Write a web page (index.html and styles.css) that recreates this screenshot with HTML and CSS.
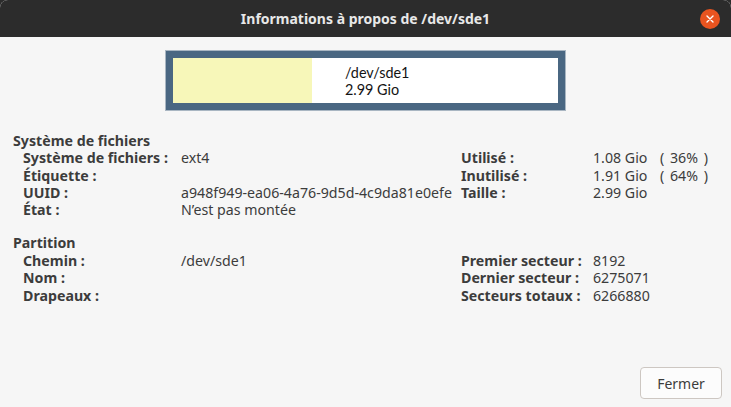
FILE: index.html
```html
<!DOCTYPE html>
<html lang="fr">
<head>
<meta charset="utf-8">
<title>Informations à propos de /dev/sde1</title>
<link rel="stylesheet" href="styles.css">
</head>
<body>
<div class="window">
  <header class="titlebar">
    <span class="title">Informations à propos de /dev/sde1</span>
    <span class="close">
      <svg width="20" height="20" viewBox="0 0 20 20"><circle cx="10" cy="10" r="10" fill="#e95420"/><path d="M7 7 L13 13 M13 7 L7 13" stroke="#fff" stroke-width="1.4" stroke-linecap="round"/></svg>
    </span>
  </header>
  <main class="content">
    <div class="graphic-wrap">
      <div class="graphic">
        <div class="inner">
          <div class="used"></div>
          <div class="gtext">
            <div>/dev/sde1</div>
            <div>2.99 Gio</div>
          </div>
        </div>
      </div>
    </div>

    <section class="section fs">
      <div class="head">Système de fichiers</div>
      <div class="grid">
        <span class="lbl">Système de fichiers :</span><span>ext4</span><span class="lbl">Utilisé :</span><span>1.08 Gio</span><span class="pct">( 36% )</span>
        <span class="lbl">Étiquette :</span><span></span><span class="lbl">Inutilisé :</span><span>1.91 Gio</span><span class="pct">( 64% )</span>
        <span class="lbl">UUID :</span><span>a948f949-ea06-4a76-9d5d-4c9da81e0efe</span><span class="lbl">Taille :</span><span>2.99 Gio</span><span></span>
        <span class="lbl">État :</span><span>N’est pas montée</span><span></span><span></span><span></span>
      </div>
    </section>

    <section class="section part">
      <div class="head">Partition</div>
      <div class="grid">
        <span class="lbl">Chemin :</span><span>/dev/sde1</span><span class="lbl">Premier secteur :</span><span>8192</span><span></span>
        <span class="lbl">Nom :</span><span></span><span class="lbl">Dernier secteur :</span><span>6275071</span><span></span>
        <span class="lbl">Drapeaux :</span><span></span><span class="lbl">Secteurs totaux :</span><span>6266880</span><span></span>
      </div>
    </section>

    <div class="actions">
      <button class="btn">Fermer</button>
    </div>
  </main>
</div>
</body>
</html>
```

FILE: styles.css
```css
* { box-sizing: border-box; }
html, body {
  margin: 0;
  padding: 0;
  width: 731px;
  height: 407px;
  overflow: hidden;
  background: #2c2c2c;
}
body {
  font-family: "Noto Sans", "DejaVu Sans", sans-serif;
  font-size: 14.2px;
  color: #3c3c3c;
}
.window {
  width: 731px;
  height: 407px;
  display: flex;
  flex-direction: column;
  background: #f6f6f6;
  border-radius: 8px 8px 0 0;
  overflow: hidden;
}
.titlebar {
  height: 37px;
  flex: none;
  background: #2c2c2c;
  display: flex;
  align-items: center;
  justify-content: center;
  position: relative;
}
.title {
  color: #e8e8e8;
  font-weight: bold;
  font-size: 14px;
}
.close {
  position: absolute;
  right: 11px;
  top: 9px;
  width: 20px;
  height: 20px;
  display: flex;
}
.content {
  flex: 1;
  display: flex;
  flex-direction: column;
  padding: 13px 0 8px 13px;
}
.graphic-wrap {
  display: flex;
  justify-content: center;
  padding-right: 13px;
}
.graphic {
  width: 401px;
  height: 61px;
  background: #4a6782;
  border: 1px solid #a9b6c2;
  padding: 7px;
}
.inner {
  height: 100%;
  background: #ffffff;
  display: flex;
}
.used {
  width: 139px;
  background: #f7f7b9;
}
.gtext {
  padding: 6px 0 0 33px;
  color: #141414;
  font-family: Lato, "Noto Sans", sans-serif;
  line-height: 17px;
  font-size: 14.4px;
}
.section {
  display: flex;
  flex-direction: column;
}
.fs { margin-top: 21px; }
.part { margin-top: 16px; }
.head {
  font-weight: bold;
  line-height: 17.3px;
}
.grid {
  display: grid;
  grid-template-columns: 158px 280px 132px 67px auto;
  grid-auto-rows: 17.3px;
  padding-left: 10px;
  align-items: center;
  white-space: nowrap;
}
.lbl { font-weight: bold; }
.pct { word-spacing: 2px; }
.actions {
  margin-top: auto;
  display: flex;
  justify-content: flex-end;
  padding-right: 9px;
}
.btn {
  font-family: inherit;
  font-size: 14px;
  color: #3c3c3c;
  width: 82px;
  height: 32px;
  background: #fcfcfc;
  border: 1px solid #cdc7c2;
  border-radius: 4px;
}
```
